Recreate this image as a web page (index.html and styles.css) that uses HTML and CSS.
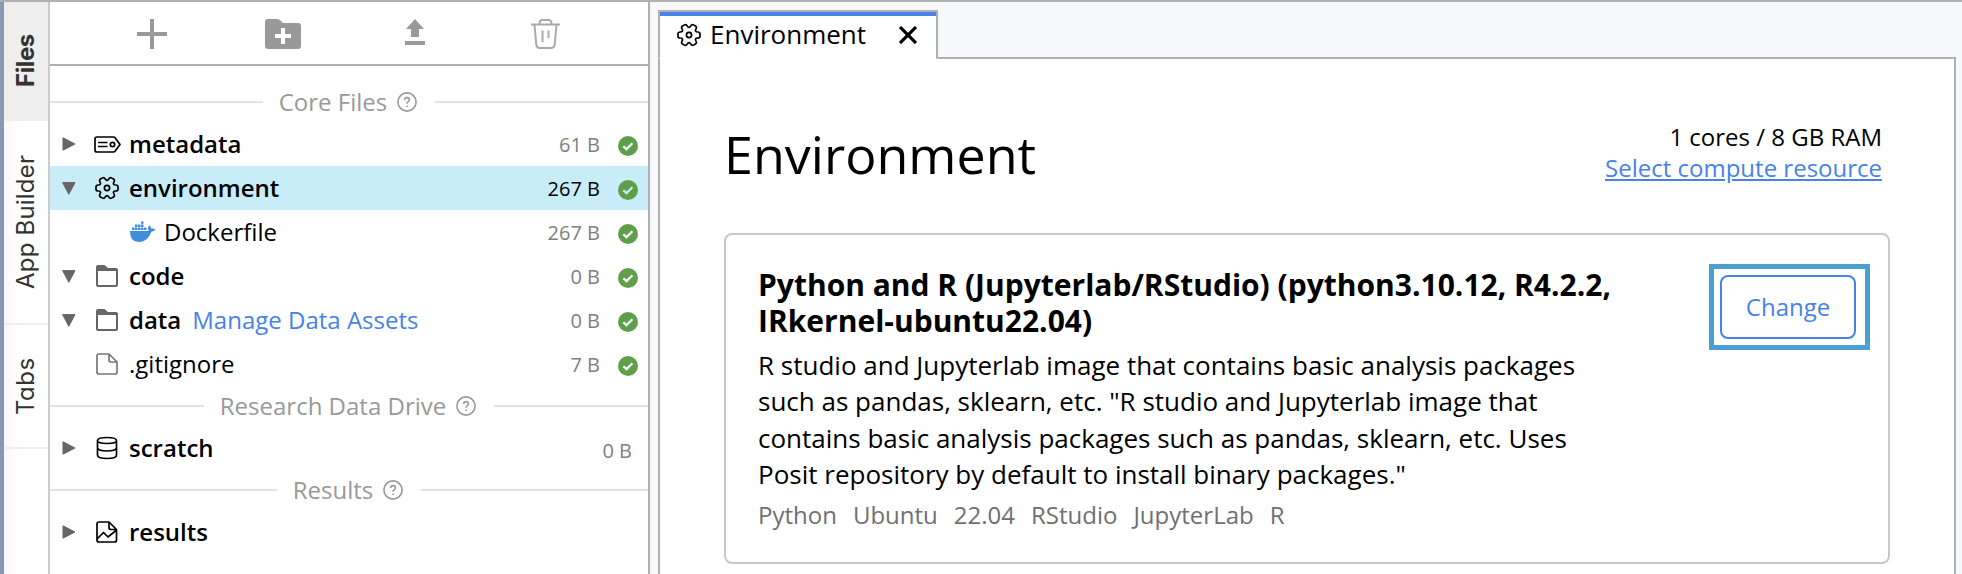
FILE: index.html
```
<!DOCTYPE html>
<html lang="en">
<head>
<meta charset="utf-8">
<title>Environment</title>
<link rel="stylesheet" href="styles.css">
</head>
<body>
<svg class="defs" width="0" height="0">
  <defs><path id="tooth" d="M8.600 -3 C10.200 -3 11 -2.400 11 -1.200 V1.200 C11 2.400 10.200 3 8.600 3 C6.600 3 5.900 4.200 6.900 5.950"/></defs>
  <symbol id="gear" viewBox="-12 -12 24 24"><use href="#tooth"/><use href="#tooth" transform="rotate(60)"/><use href="#tooth" transform="rotate(120)"/><use href="#tooth" transform="rotate(180)"/><use href="#tooth" transform="rotate(240)"/><use href="#tooth" transform="rotate(300)"/><circle r="2.600"/></symbol>
  <symbol id="help" viewBox="0 0 20 20"><circle cx="10" cy="10" r="9.1"/><path d="M7.6 8 Q7.7 5.6 10 5.6 Q12.4 5.6 12.4 7.7 Q12.4 9 11.2 9.7 Q10 10.4 10 11.8 M10 13.4 V15"/></symbol>
  <symbol id="ok" viewBox="0 0 20 20"><circle cx="10" cy="10" r="10" fill="#5f9f4a"/><path d="M5.4 10.2 L8.5 13.1 L14.4 7.2" fill="none" stroke="currentColor" stroke-width="2.2"/></symbol>
  <symbol id="right" viewBox="0 0 14 14"><path d="M1 .8 L13 7 L1 13.2 Z" fill="#666" stroke="#666" stroke-linejoin="round"/></symbol>
  <symbol id="down" viewBox="0 0 14 14"><path d="M.6 1.600 H13 L6.800 13.300 Z" fill="#666" stroke="#666" stroke-linejoin="round"/></symbol>
  <symbol id="folder" viewBox="0 0 22 22"><path d="M0 2 Q0 0 2 0 H8.500 L12 3 H20 Q22 3 22 5 V20 Q22 22 20 22 H2 Q0 22 0 20 Z M2 6 V20 H20 V6 Z" fill="#666" fill-rule="evenodd"/></symbol>
</svg>
<div class="app">
  <nav class="rail">
    <div class="rail-tab files">Files</div>
    <div class="rail-tab builder">App Builder</div>
    <div class="rail-tab tabs">Tabs</div>
  </nav>
  <aside class="side">
    <div class="tools">
      <svg class="i-plus" width="30" height="30" viewBox="0 0 30 30"><path d="M15 0 V30 M0 15 H30" stroke="#999" stroke-width="4"/></svg>
      <svg class="i-newfolder" width="36" height="30" viewBox="0 0 36 30"><path d="M0 3 Q0 0 3 0 H12 Q14 0 15.5 1.6 L18 4 H33 Q36 4 36 7 V27 Q36 30 33 30 H3 Q0 30 0 27 Z" fill="#999"/><path d="M18 9 V25 M10 17 H26" stroke="#fff" stroke-width="4"/></svg>
      <svg class="i-upload" width="20" height="26" viewBox="0 0 20 26"><path d="M10 0 L19 10 H14 V18 H6 V10 H1 Z M0 22 H20 V26 H0 Z" fill="#999"/></svg>
      <svg class="i-trash" width="29" height="30" viewBox="0 0 29 30"><path d="M0 5.500 H29 M8.500 5 Q8.500 1 11.500 1 H17.500 Q20.500 1 20.500 5 M3.500 6 L5.300 25.600 Q5.700 29 9 29 H20 Q23.300 29 23.700 25.600 L25.500 6 M11.500 11.500 V23 M17.500 11.500 V19" fill="none" stroke="#aaa" stroke-width="2"/></svg>
    </div>
    <div class="tree">
      <div class="sep"><span class="sep-text">Core Files</span><svg class="help"><use href="#help"/></svg></div>
      <div class="row"><svg class="tri"><use href="#right"/></svg><span class="icon"><svg width="27" height="17" viewBox="0 0 27 17" class="line"><path d="M3 1 H19.500 Q20.500 1 21.200 1.900 L26 8.500 L21.200 15.100 Q20.500 16 19.500 16 H3 Q1 16 1 14 V3 Q1 1 3 1 Z M4 6.500 H13.500 M4 10.500 H13.500"/><circle cx="18.500" cy="8.500" r="2.200"/></svg></span><span class="name">metadata</span><span class="size">61 B</span><svg class="ok"><use href="#ok"/></svg></div>
      <div class="row selected"><svg class="tri"><use href="#down"/></svg><span class="icon"><svg class="line" width="24" height="24"><use href="#gear"/></svg></span><span class="name">environment</span><span class="size">267 B</span><svg class="ok"><use href="#ok"/></svg></div>
      <div class="row child"><span class="icon"><svg width="26" height="22" viewBox="0 0 26 22"><path d="M0 10 H18.300 Q18.800 9 18 7.500 Q18 5.500 19.300 4.300 Q21 5.500 21.200 7.600 Q23.500 7 25.500 8.200 Q24.500 10.500 21.300 10.700 Q18 21 8.500 21 Q0 21 0 10 Z" fill="#3f8edc"/><path d="M2 7.800 H16.500 M5 4.700 H13.500" stroke="#3f8edc" stroke-width="2.400" stroke-dasharray="2.500 .500"/><path d="M11 1.600 H13.500" stroke="#3f8edc" stroke-width="2.400"/></svg></span><span class="name plain">Dockerfile</span><span class="size">267 B</span><svg class="ok"><use href="#ok"/></svg></div>
      <div class="row"><svg class="tri"><use href="#down"/></svg><span class="icon"><svg width="22" height="22"><use href="#folder"/></svg></span><span class="name">code</span><span class="size">0 B</span><svg class="ok"><use href="#ok"/></svg></div>
      <div class="row"><svg class="tri"><use href="#down"/></svg><span class="icon"><svg width="22" height="22"><use href="#folder"/></svg></span><span class="name">data</span><a class="manage">Manage Data Assets</a><span class="size">0 B</span><svg class="ok"><use href="#ok"/></svg></div>
      <div class="row"><span class="tri"></span><span class="icon"><svg class="line gray" width="22" height="22" viewBox="0 0 22 22"><path d="M3 1 H13 L21 9 V19 Q21 21 19 21 H3 Q1 21 1 19 V3 Q1 1 3 1 Z M13 1 V7 Q13 9 15 9 H21"/></svg></span><span class="name plain">.gitignore</span><span class="size">7 B</span><svg class="ok"><use href="#ok"/></svg></div>
      <div class="sep"><span class="sep-text">Research Data Drive</span><svg class="help"><use href="#help"/></svg></div>
      <div class="row scratch"><svg class="tri"><use href="#right"/></svg><span class="icon"><svg class="line" width="22" height="24" viewBox="0 0 22 24"><path d="M1.500 4.500 Q1.500 1.500 11 1.500 Q20.500 1.500 20.500 4.500 Q20.500 7.500 11 7.500 Q1.500 7.500 1.500 4.500 V19 Q1.500 22.500 11 22.500 Q20.500 22.500 20.500 19 V4.500 M1.500 12 Q2.500 15 11 15 Q19.500 15 20.500 12"/></svg></span><span class="name">scratch</span><span class="size">0 B</span></div>
      <div class="sep"><span class="sep-text">Results</span><svg class="help"><use href="#help"/></svg></div>
      <div class="row"><svg class="tri"><use href="#right"/></svg><span class="icon"><svg class="line" width="22" height="22" viewBox="0 0 22 22"><path d="M3 1 H13 L20.500 8.500 V19 Q20.500 21 18.500 21 H3 Q1 21 1 19 V3 Q1 1 3 1 Z M13 1 V6.500 Q13 8.500 15 8.500 H20.500 M1.500 17.500 L7.500 11.500 L12 16 L20 9.500"/></svg></span><span class="name">results</span></div>
    </div>
  </aside>
  <main class="main">
    <div class="tabbar">
      <div class="tab"><svg class="line" width="24" height="24"><use href="#gear"/></svg><span class="tab-name">Environment</span><svg width="18" height="18" viewBox="0 0 18 18"><path d="M1 1 L17 17 M17 1 L1 17" stroke="#000" stroke-width="3.200"/></svg></div>
      <div class="tab-rest"></div>
    </div>
    <section class="pane">
      <header class="head">
        <h1 class="title">Environment</h1>
        <div class="compute"><div>1 cores / 8 GB RAM</div><a class="select">Select compute resource</a></div>
      </header>
      <article class="card">
        <div class="info">
          <h2 class="image-name">Python and R (Jupyterlab/RStudio) (python3.10.12, R4.2.2,<br>IRkernel-ubuntu22.04)</h2>
          <p class="desc">R studio and Jupyterlab image that contains basic analysis packages<br>such as pandas, sklearn, etc. "R studio and Jupyterlab image that<br>contains basic analysis packages such as pandas, sklearn, etc. Uses<br>Posit repository by default to install binary packages."</p>
          <div class="tags"><span>Python</span><span>Ubuntu</span><span>22.04</span><span>RStudio</span><span>JupyterLab</span><span>R</span></div>
        </div>
        <div class="highlight"><button class="change">Change</button></div>
      </article>
    </section>
  </main>
</div>
</body>
</html>
```
FILE: styles.css
```
* { box-sizing: border-box; }
body { margin: 0; font-family: "Open Sans", "Noto Sans", sans-serif; font-size: 24px; color: #000; }
svg { display: block; flex: none; }
.defs { position: absolute; }
.app { display: flex; width: 1962px; height: 574px; overflow: hidden; border-top: 2px solid #b0b0b0; background: #f7f8fc; }
.line { fill: none; stroke: #000; stroke-width: 1.7; stroke-linejoin: round; }
.line.gray { stroke: #777; }

.rail { width: 50px; border-left: 4px solid #8b98b4; border-right: 2px solid #ccc; background: linear-gradient(90deg, #f8f8fa, #fff 16px); }
.rail-tab { display: flex; align-items: center; justify-content: center; writing-mode: vertical-rl; transform: rotate(180deg); width: 44px; padding-left: 2px; font-family: Inter, sans-serif; font-size: 24px; font-feature-settings: "cv11"; letter-spacing: .2px; color: #333; border-top: 2px solid #eee; }
.files { height: 119px; background: #eee; font-weight: 700; letter-spacing: -.4px; }
.builder { height: 204px; }
.tabs { height: 124px; letter-spacing: .5px; }

.side { width: 600px; border-right: 2px solid #b0b0b0; background: #fff; }
.tools { display: flex; height: 64px; padding: 17px 87px 0; border-bottom: 2px solid #b0b0b0; }
.i-newfolder { margin-left: 98px; }
.i-upload { margin-left: 104px; }
.i-trash { margin-left: 106px; }
.tree { padding-top: 16px; }
.sep { display: flex; align-items: center; height: 40px; color: #999; }
.sep::before, .sep::after { content: ""; flex: 1; height: 2px; background: #e2e2e2; }
.sep::before { margin-right: 16px; }
.sep::after { margin-left: 18px; }
.sep-text, .name, .manage { padding-bottom: 2px; }
.help { width: 20px; height: 20px; margin-left: 10px; fill: none; stroke: #999; stroke-width: 1.6; }
.row { display: flex; align-items: center; height: 44px; padding: 0 10px 0 12px; }
.row.selected { background: #c9edf8; }
.row.selected .size { color: #000; }
.row.selected .ok { color: #c9edf8; }
.tri { width: 14px; height: 14px; flex: none; }
.icon { display: flex; justify-content: center; width: 28px; margin: 0 8px 0 17px; }
.child { padding-left: 62px; }
.child .icon { margin-right: 7px; }
.name { font-weight: 600; }
.name.plain { font-weight: 400; }
.manage { margin-left: 11px; color: #4682e8; }
.size { margin-left: auto; font-size: 20px; color: #808080; }
.ok { width: 20px; height: 20px; margin: 3px 0 0 18px; color: #fff; }
.scratch { padding-right: 16px; }
.scratch .size { padding-top: 4px; }

.main { flex: 1; display: flex; flex-direction: column; padding: 8px 6px 0 8px; }
.tabbar { display: flex; height: 49px; }
.tab { display: flex; align-items: center; width: 280px; padding: 0 19px 1px 17px; border: 2px solid #b0b0b0; border-bottom: 0; border-radius: 0 0 2px 2px; background: #fff; box-shadow: inset 0 4px #4682e8; font-size: 26px; }
.tab-name { margin: 0 auto 0 9px; padding-bottom: 2px; }
.tab-rest { flex: 1; border-bottom: 2px solid #b0b0b0; }
.pane { flex: 1; padding: 59px 64px 0 64px; border: 2px solid #b0b0b0; border-width: 0 2px; background: #fff; }
.head { display: flex; justify-content: space-between; height: 115px; }
.title { margin: 0; font-size: 52px; font-weight: 400; line-height: 71px; }
.compute { padding: 3px 8px 0 0; line-height: 31px; text-align: right; }
.select { color: #4682e8; text-decoration: underline; }
.card { display: flex; justify-content: space-between; height: 331px; padding: 29px 18px 0 32px; border: 2px solid #c8c8c8; border-radius: 8px; }
.info { white-space: nowrap; }
.image-name { margin: 3px 0 0; font-size: 30px; font-weight: 700; line-height: 36px; }
.desc { margin: 8px 0 0; font-size: 26px; line-height: 36.400px; }
.tags { display: flex; gap: 16px; margin-top: 5px; color: #707070; }
.highlight { width: 161px; height: 86px; padding: 6px; border: 5px solid #4a9fd3; }
.change { display: block; width: 136px; height: 64px; padding: 0 0 2px; border: 2px solid #4682e8; border-radius: 8px; background: #fff; color: #4682e8; font: inherit; }
```
